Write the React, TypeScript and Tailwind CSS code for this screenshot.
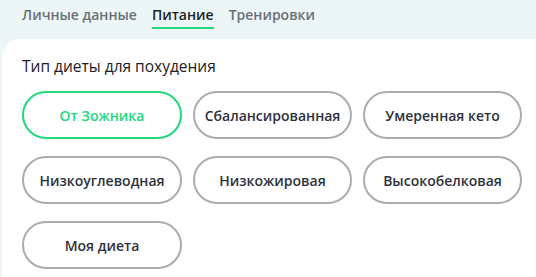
import { useState } from 'react';

const tabs = ['Личные данные', 'Питание', 'Тренировки'];

const diets = [
  'От Зожника',
  'Сбалансированная',
  'Умеренная кето',
  'Низкоуглеводная',
  'Низкожировая',
  'Высокобелковая',
  'Моя диета',
];

export default function App() {
  const [activeTab, setActiveTab] = useState('Питание');
  const [diet, setDiet] = useState('От Зожника');

  return (
    <div
      className="w-[536px] h-[277px] overflow-hidden bg-[#edf6f7]"
      style={{ fontFamily: '"Open Sans", "Noto Sans", sans-serif' }}
    >
      {/* Tabs */}
      <div className="flex gap-[15px] pl-[22px] pt-[2px] h-[39px]">
        {tabs.map((tab) => (
          <button
            key={tab}
            onClick={() => setActiveTab(tab)}
            className={`h-[27px] text-[14px] font-semibold leading-[20px] border-b-2 ${
              activeTab === tab
                ? 'text-[#1c1f26] border-[#22d77c]'
                : 'text-[#6b6f75] border-transparent'
            }`}
          >
            {tab}
          </button>
        ))}
      </div>

      {/* Card */}
      <div className="ml-[2px] h-[250px] bg-white rounded-tl-[18px] pl-[20px] pt-[15px]">
        <h3 className="text-[15.5px] text-[#1d2026] leading-[24px]">Тип диеты для похудения</h3>
        <div className="mt-[13px] grid grid-cols-[160px_159px_159px] gap-x-[11px] gap-y-[17px]">
          {diets.map((d) => (
            <button
              key={d}
              onClick={() => setDiet(d)}
              className={`h-[48px] rounded-full border-2 text-[14px] font-semibold ${
                diet === d
                  ? 'border-[#22d77c] text-[#22d77c]'
                  : 'border-[#a9acb0] text-[#2e3240]'
              }`}
            >
              {d}
            </button>
          ))}
        </div>
      </div>
    </div>
  );
}
